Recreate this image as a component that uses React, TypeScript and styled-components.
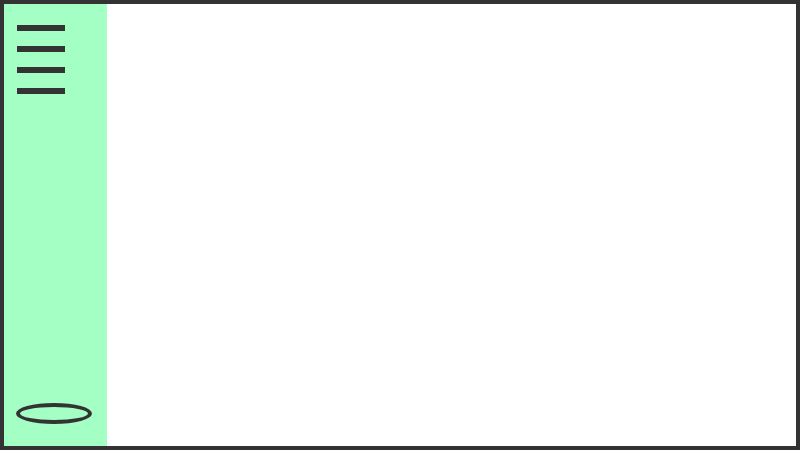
import React from "react";
import styled, { createGlobalStyle } from "styled-components";

const Global = createGlobalStyle`
  html, body { margin: 0; padding: 0; background: #ffffff; }
  * { box-sizing: border-box; }
`;

const Frame = styled.div`
  width: 800px;
  height: 450px;
  border: 4px solid #333333;
  display: flex;
  background: #ffffff;
  font-family: "Liberation Sans", Arial, sans-serif;
`;

const Sidebar = styled.aside`
  width: 103px;
  background: #a3ffc4;
  display: flex;
  flex-direction: column;
  justify-content: space-between;
  padding: 21px 0 22px 0;
`;

const Menu = styled.div`
  display: flex;
  flex-direction: column;
  gap: 15.6px;
  padding-left: 13px;
`;

const MenuLine = styled.span`
  display: block;
  width: 48px;
  height: 5.5px;
  background: #333333;
`;

const Avatar = styled.div`
  margin-left: 12px;
  width: 76px;
  height: 21px;
  border: 4px solid #333333;
  border-radius: 50%;
`;

const Main = styled.main`
  flex: 1;
  background: #ffffff;
`;

export default function App() {
  return (
    <>
      <Global />
      <Frame>
        <Sidebar>
          <Menu>
            <MenuLine />
            <MenuLine />
            <MenuLine />
            <MenuLine />
          </Menu>
          <Avatar />
        </Sidebar>
        <Main />
      </Frame>
    </>
  );
}
